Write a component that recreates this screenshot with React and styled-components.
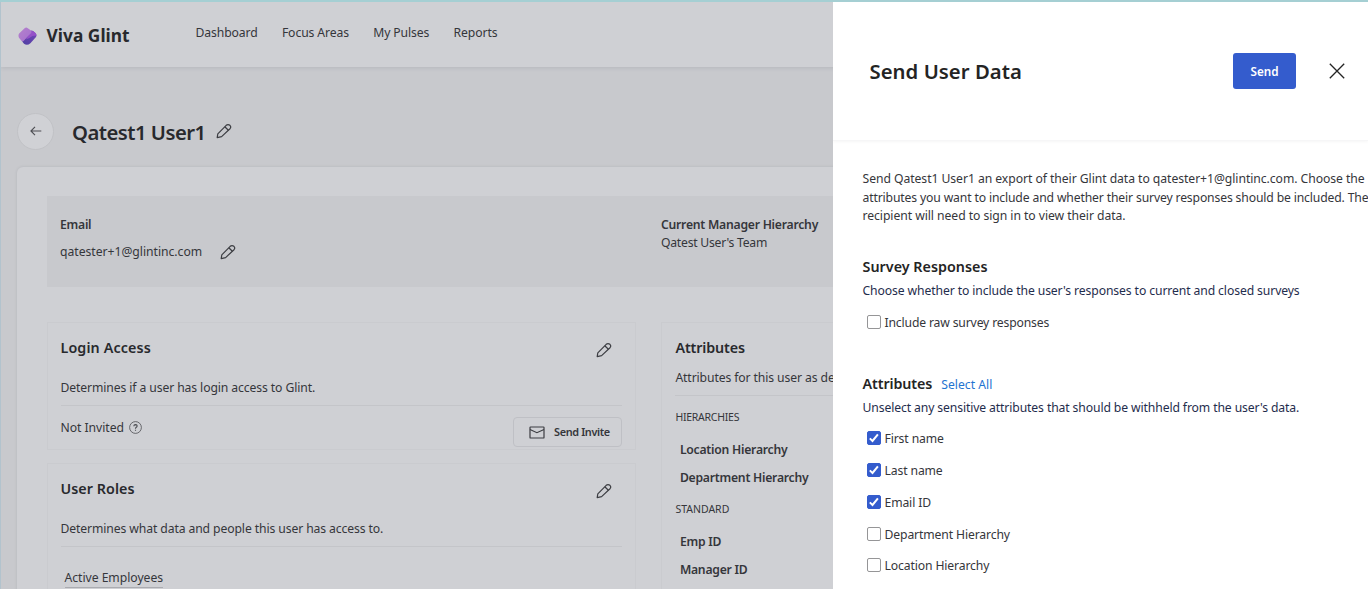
import React from "react";
import styled, { createGlobalStyle } from "styled-components";

const Global = createGlobalStyle`
  * { box-sizing: border-box; }
  body { margin: 0; overflow: hidden; background: #c8c9cd; }
  body, button, input { font-family: "Noto Sans", "Open Sans", sans-serif; }
  h1, h2, h3, p, ul { margin: 0; padding: 0; font-weight: inherit; }
`;

const Screen = styled.div`
  position: relative;
  width: 1368px;
  height: 589px;
  overflow: hidden;
  border-top: 2px solid #a5cfd3;
  background: #c8c9cd;
`;

const Page = styled.div`
  height: 587px;
  overflow: hidden;
  border-left: 1px solid #b2c3cd;
`;

const Text = styled.span`
  display: block;
  padding-top: ${(p) => p.$drop || 0}px;
  white-space: nowrap;
  font-size: ${(p) => p.$size || 12.2}px;
  line-height: ${(p) => p.$line || 18}px;
  font-weight: ${(p) => p.$weight || 400};
  letter-spacing: ${(p) => p.$track ?? (p.$weight ? -0.24 : -0.11)}px;
  color: ${(p) => p.$color || "#35363b"};
`;

const TopBar = styled.header`
  display: flex;
  align-items: flex-start;
  height: 65px;
  padding: 23px 0 0 17px;
  background: #cfd0d4;
  box-shadow: 0 1px 4px rgba(60, 62, 70, 0.12);
`;

const Brand = styled.div`
  display: flex;
  align-items: center;
  gap: 9.5px;
  width: 177.5px;
`;

const Nav = styled.nav`
  display: flex;
  gap: 24.3px;
  margin-top: -1px;
`;

const TitleRow = styled.div`
  display: flex;
  align-items: center;
  height: 36px;
  margin: 46px 0 0 16px;
`;

const BackButton = styled.button`
  display: grid;
  place-items: center;
  width: 37px;
  height: 37px;
  margin-right: 18px;
  padding: 0;
  border: 1px solid #c1c2c6;
  border-radius: 50%;
  background: #d0d1d5;
`;

const PencilWrap = styled.span`
  display: flex;
  margin-left: ${(p) => p.$gap || 0}px;
`;

const ProfileCard = styled.main`
  width: 1400px;
  height: 600px;
  margin: 18px 0 0 16px;
  padding: 29px 0 0 30px;
  border-radius: 6px;
  background: #cfd0d4;
  box-shadow: 0 0 3px rgba(60, 62, 70, 0.14);
`;

const Summary = styled.section`
  display: grid;
  grid-template-columns: 601px 1fr;
  height: 91px;
  padding: 20px 0 0 13px;
  background: #c8c9cd;
`;

const EmailLine = styled.div`
  display: flex;
  align-items: center;
  margin-top: 9px;
`;

const Columns = styled.div`
  display: grid;
  grid-template-columns: 589px 700px;
  column-gap: 25px;
  margin-top: 35px;
`;

const Stack = styled.div`
  display: flex;
  flex-direction: column;
  gap: 13px;
`;

const Panel = styled.section`
  height: ${(p) => p.$height}px;
  padding: 15px 13px 0 ${(p) => p.$inset || 12.5}px;
  border: 1px solid #cacbcf;
`;

const PanelHead = styled.div`
  display: flex;
  justify-content: space-between;
  height: 31px;
  padding-right: 10.5px;
`;

const HeadPencil = styled.span`
  display: flex;
  margin-top: 4px;
`;

const PanelLead = styled.div`
  height: ${(p) => p.$height}px;
  border-bottom: 1px solid #c4c5c9;
`;

const AccessRow = styled.div`
  display: flex;
  justify-content: space-between;
  padding-top: 11px;
`;

const Status = styled.div`
  display: flex;
  align-items: center;
  gap: 5px;
  height: 21px;
`;

const InviteButton = styled.button`
  display: flex;
  align-items: center;
  gap: 9px;
  width: 109px;
  height: 30px;
  padding: 0 0 0 15px;
  border: 1px solid #bfc0c5;
  border-radius: 4px;
  background: transparent;
`;

const RoleLink = styled.span`
  display: inline-block;
  margin: 22px 0 0 4px;
  border-bottom: 1px solid #aaabb0;
`;

const AttributeGroup = styled.div`
  padding-top: ${(p) => p.$top}px;
`;

const AttributeList = styled.div`
  display: flex;
  flex-direction: column;
  gap: 9.5px;
  padding: ${(p) => p.$top}px 0 0 4.5px;
`;

const Drawer = styled.aside`
  position: absolute;
  top: 0;
  left: 833px;
  width: 535px;
  height: 587px;
  overflow: hidden;
  background: #fff;
`;

const DrawerHead = styled.div`
  display: flex;
  align-items: center;
  height: 139px;
  padding: 0 23px 0 36.5px;
  border-bottom: 1px solid #f6f6f7;
  box-shadow: 0 1px 3px rgba(0, 0, 0, 0.04);
`;

const SendButton = styled.button`
  display: grid;
  place-items: center;
  width: 63px;
  height: 36px;
  margin: 0 33px 0 auto;
  padding: 0;
  border: 0;
  border-radius: 3px;
  background: #345ccd;
`;

const DrawerBody = styled.div`
  padding: 29.4px 0 0 29.5px;
`;

const Section = styled.section`
  padding-top: ${(p) => p.$top}px;
`;

const SectionTitle = styled.div`
  display: flex;
  align-items: center;
  gap: 9px;
  height: 24px;
`;

const OptionList = styled.div`
  display: flex;
  flex-direction: column;
  gap: 11.9px;
  padding: ${(p) => p.$top}px 0 0 4px;
`;

const Option = styled.label`
  display: flex;
  align-items: center;
  gap: 4px;
  height: 20px;
`;

const Box = styled.span`
  display: grid;
  place-items: center;
  width: 14px;
  height: 14px;
  border: 1px solid ${(p) => (p.$on ? "#345ccd" : "#959597")};
  border-radius: 2px;
  background: ${(p) => (p.$on ? "#345ccd" : "#fff")};
`;

function Pencil() {
  return (
    <svg width="16" height="16" viewBox="0 0 16 16" fill="none" stroke="#3c3d42" strokeWidth="1.2" strokeLinejoin="round">
      <path d="M1.2 14.6 L1.8 10.8 L10.2 2.3 Q12 .8 13.9 2.3 Q15.5 3.9 14 5.7 L5.6 13.6 Z" />
      <path d="M8.8 3.7 L12.4 7.2" />
    </svg>
  );
}

function Logo() {
  return (
    <svg width="19" height="19" viewBox="0 0 19 19">
      <defs>
        <linearGradient id="front" x1="0" y1="0" x2="1" y2="1">
          <stop offset="0" stopColor="#b582cc" />
          <stop offset="1" stopColor="#a46fce" />
        </linearGradient>
        <linearGradient id="back" x1="1" y1="0" x2="0.4" y2="1">
          <stop offset="0" stopColor="#7846b8" />
          <stop offset="1" stopColor="#5540a6" />
        </linearGradient>
      </defs>
      <path d="M13.4 3.6 Q14.6 3.5 17.4 5.9 Q19.2 7.8 18 10 L12.4 16.2 Q9.2 19 6 16.8 L4.2 14.4 Z" fill="url(#back)" />
      <path d="M10.2 9 L13.6 3.7 Q14.6 3.5 17.4 5.9 Q18.6 7.2 18.4 8.6 Q14 8.6 11.4 11 L7.8 12.6 Z" fill="#9450c8" />
      <path d="M6.6 1.2 Q8.2 -.4 9.8 1.2 L13 3.6 Q14 4.8 13.1 6 L5.8 13.7 Q4.6 14.8 3.4 13.7 L1 10.8 Q-.1 8.6 1.1 6.5 Z" fill="url(#front)" />
    </svg>
  );
}

function PanelTitle({ children, track = 0, color = "#28292d" }) {
  return (
    <Text as="h2" $size={14.3} $line={20} $weight={600} $track={track} $color={color}>
      {children}
    </Text>
  );
}

function Choice({ label, on, track = -0.13 }) {
  return (
    <Option>
      <Box $on={on}>
        {on && (
          <svg width="12" height="12" viewBox="0 0 12 12" fill="none" stroke="#fff" strokeWidth="2">
            <path d="M1.8 6.4 L4.5 9 L9.9 2.4" />
          </svg>
        )}
      </Box>
      <Text $track={track} $drop={2}>{label}</Text>
    </Option>
  );
}

export default function App() {
  return (
    <Screen>
      <Global />
      <Page>
        <TopBar>
          <Brand>
            <Logo />
            <Text $size={17.3} $line={22} $weight={700} $track={0.05} $color="#28292d">Viva Glint</Text>
          </Brand>
          <Nav>
            <Text>Dashboard</Text>
            <Text>Focus Areas</Text>
            <Text>My Pulses</Text>
            <Text>Reports</Text>
          </Nav>
        </TopBar>
        <TitleRow>
          <BackButton aria-label="Back">
            <svg width="12" height="10" viewBox="0 0 12 10" fill="none" stroke="#4c4d52" strokeWidth="1.1">
              <path d="M5 .8 L.9 5 L5 9.2 M1 5 H11.3" />
            </svg>
          </BackButton>
          <Text as="h1" $size={20.3} $line={28} $weight={600} $track={-0.52} $drop={1} $color="#28292d">Qatest1 User1</Text>
          <PencilWrap $gap={10}><Pencil /></PencilWrap>
        </TitleRow>
        <ProfileCard>
          <Summary>
            <div>
              <Text $weight={600}>Email</Text>
              <EmailLine>
                <Text $track={-0.03}>qatester+1@glintinc.com</Text>
                <PencilWrap $gap={18}><Pencil /></PencilWrap>
              </EmailLine>
            </div>
            <div>
              <Text $weight={600}>Current Manager Hierarchy</Text>
              <Text $track={-0.25}>Qatest User's Team</Text>
            </div>
          </Summary>
          <Columns>
            <Stack>
              <Panel $height={128}>
                <PanelHead>
                  <PanelTitle track={0.12}>Login Access</PanelTitle>
                  <HeadPencil><Pencil /></HeadPencil>
                </PanelHead>
                <PanelLead $height={37}>
                  <Text $line={37}>Determines if a user has login access to Glint.</Text>
                </PanelLead>
                <AccessRow>
                  <Status>
                    <Text $track={-0.05}>Not Invited</Text>
                    <svg width="13" height="13" viewBox="0 0 13 13" fill="none" stroke="#4c4d52">
                      <circle cx="6.5" cy="6.5" r="5.9" strokeWidth=".8" />
                      <path d="M4.8 5.2 Q4.9 3.6 6.5 3.6 Q8.2 3.7 8.1 5.1 Q8 5.9 7 6.5 Q6.5 6.9 6.5 7.7 M6.5 8.7 V9.8" strokeWidth="1.1" />
                    </svg>
                  </Status>
                  <InviteButton>
                    <svg width="16" height="13" viewBox="0 0 16 13" fill="none" stroke="#3c3d42" strokeWidth="1.2">
                      <rect x="1" y="1" width="14" height="11" rx=".6" />
                      <path d="M1 3.5 L7.9 6.7 L15 3.5" />
                    </svg>
                    <Text $size={10.9} $weight={600} $track={-0.36}>Send Invite</Text>
                  </InviteButton>
                </AccessRow>
              </Panel>
              <Panel $height={200}>
                <PanelHead>
                  <PanelTitle track={0.05}>User Roles</PanelTitle>
                  <HeadPencil><Pencil /></HeadPencil>
                </PanelHead>
                <PanelLead $height={37}>
                  <Text $line={37}>Determines what data and people this user has access to.</Text>
                </PanelLead>
                <RoleLink><Text $track={-0.04}>Active Employees</Text></RoleLink>
              </Panel>
            </Stack>
            <Panel $height={340} $inset={13.4}>
              <PanelTitle track={-0.12}>Attributes</PanelTitle>
              <PanelLead $height={38}>
                <Text $line={40}>Attributes for this user as defined</Text>
              </PanelLead>
              <AttributeGroup $top={12}>
                <Text $size={10.5} $track={-0.25}>HIERARCHIES</Text>
                <AttributeList $top={15}>
                  <Text $weight={600}>Location Hierarchy</Text>
                  <Text $weight={600}>Department Hierarchy</Text>
                </AttributeList>
              </AttributeGroup>
              <AttributeGroup $top={13.4}>
                <Text $size={10.5} $track={0}>STANDARD</Text>
                <AttributeList $top={15.6}>
                  <Text $weight={600}>Emp ID</Text>
                  <Text $weight={600}>Manager ID</Text>
                </AttributeList>
              </AttributeGroup>
            </Panel>
          </Columns>
        </ProfileCard>
      </Page>
      <Drawer>
        <DrawerHead>
          <Text as="h1" $size={20.3} $line={28} $weight={600} $track={0.04} $color="#242424">Send User Data</Text>
          <SendButton><Text $size={11.7} $weight={600} $track={0} $color="#fff">Send</Text></SendButton>
          <svg width="16" height="16" viewBox="0 0 16 16" fill="none" stroke="#242424" strokeWidth="1.3">
            <path d="M.8 .8 L15.2 15.2 M15.2 .8 L.8 15.2" />
          </svg>
        </DrawerHead>
        <DrawerBody>
          <div>
            <Text as="p" $line={18.2} $track={-0.06}>Send Qatest1 User1 an export of their Glint data to qatester+1@glintinc.com. Choose the</Text>
            <Text as="p" $line={18.2} $track={-0.15}>attributes you want to include and whether their survey responses should be included. The</Text>
            <Text as="p" $line={18.2} $track={-0.06}>recipient will need to sign in to view their data.</Text>
          </div>
          <Section $top={29.6}>
            <SectionTitle>
              <PanelTitle track={0.03} color="#242424">Survey Responses</PanelTitle>
            </SectionTitle>
            <Text $line={24} $color="#1f2d4d">Choose whether to include the user's responses to current and closed surveys</Text>
            <OptionList $top={9}>
              <Choice track={-0.16} label="Include raw survey responses" />
            </OptionList>
          </Section>
          <Section $top={40}>
            <SectionTitle>
              <PanelTitle track={-0.1} color="#242424">Attributes</PanelTitle>
              <Text $track={0} $drop={2} $color="#1f74d1">Select All</Text>
            </SectionTitle>
            <Text $line={24} $track={-0.12} $color="#1f2d4d">Unselect any sensitive attributes that should be withheld from the user's data.</Text>
            <OptionList $top={8.3}>
              <Choice on label="First name" />
              <Choice on label="Last name" />
              <Choice on label="Email ID" />
              <Choice label="Department Hierarchy" />
              <Choice label="Location Hierarchy" />
            </OptionList>
          </Section>
        </DrawerBody>
      </Drawer>
    </Screen>
  );
}
